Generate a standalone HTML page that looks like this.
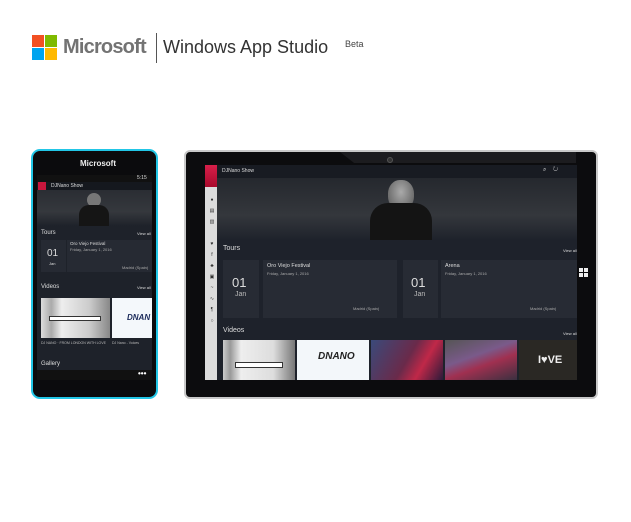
<!DOCTYPE html>
<html><head><meta charset="utf-8"><style>
*{margin:0;padding:0;box-sizing:border-box}
body{width:631px;height:522px;background:#fff;position:relative;overflow:hidden;font-family:"Liberation Sans",sans-serif}
.a{position:absolute}
.t{color:#ddd;white-space:nowrap}
</style></head><body>
<!-- logo -->
<div class="a" style="left:32px;top:35px;width:12px;height:12px;background:#f25022"></div>
<div class="a" style="left:45px;top:35px;width:12px;height:12px;background:#7fba00"></div>
<div class="a" style="left:32px;top:48px;width:12px;height:12px;background:#00a4ef"></div>
<div class="a" style="left:45px;top:48px;width:12px;height:12px;background:#ffb900"></div>
<div class="a" style="left:63px;top:36px;font-size:20px;font-weight:bold;color:#737373;letter-spacing:-0.8px;white-space:nowrap">Microsoft</div>
<div class="a" style="left:156px;top:33px;width:1px;height:30px;background:#555"></div>
<div class="a" style="left:163px;top:37px;font-size:18px;color:#333;white-space:nowrap">Windows App Studio</div>
<div class="a" style="left:345px;top:39px;font-size:9px;color:#444">Beta</div>

<!-- phone -->
<div class="a" style="left:31px;top:149px;width:127px;height:250px;border:2px solid #22c6e6;border-radius:9px;background:#0b0b0d"></div>
<div class="a t" style="left:80px;top:159px;font-size:8px;font-weight:bold;color:#eee">Microsoft</div>
<div class="a" style="left:37px;top:175px;width:115px;height:205px;background:#1e222a;overflow:hidden">
 <div class="a" style="left:0;top:0;width:115px;height:7px;background:#111"></div>
 <div class="a t" style="left:100px;top:0;font-size:5px">5:15</div>
 <div class="a" style="left:0;top:7px;width:115px;height:8px;background:#15181e"></div>
 <div class="a" style="left:1px;top:7px;width:8px;height:8px;background:#c8163c"></div>
 <div class="a t" style="left:14px;top:8px;font-size:5px">DJNano Show</div>
 <div class="a" style="left:0;top:15px;width:115px;height:36px;background:linear-gradient(#2a2d33,#35383d 60%,#1e222a)"></div>
 <div class="a" style="left:50px;top:18px;width:14px;height:14px;border-radius:50%;background:#777"></div>
 <div class="a" style="left:42px;top:30px;width:30px;height:21px;border-radius:10px 10px 0 0;background:#151515"></div>
 <div class="a t" style="left:4px;top:55px;font-size:6px">Tours</div>
 <div class="a t" style="left:100px;top:56px;font-size:4px">View all</div>
 <div class="a" style="left:4px;top:65px;width:25px;height:32px;background:#262a33"></div>
 <div class="a t" style="left:10px;top:73px;font-size:10px">01</div>
 <div class="a t" style="left:12px;top:86px;font-size:4px">Jan</div>
 <div class="a" style="left:30px;top:65px;width:85px;height:32px;background:#262a33"></div>
 <div class="a t" style="left:33px;top:66px;font-size:4.5px">Oro Viejo Festival</div>
 <div class="a t" style="left:33px;top:72px;font-size:4px;color:#aaa">Friday, January 1, 2016</div>
 <div class="a t" style="left:85px;top:90px;font-size:4px;color:#aaa">Madrid (Spain)</div>
 <div class="a t" style="left:4px;top:109px;font-size:6px">Videos</div>
 <div class="a t" style="left:100px;top:110px;font-size:4px">View all</div>
 <div class="a" style="left:4px;top:123px;width:69px;height:40px;background:linear-gradient(90deg,#ddd,#aaa 15%,#eee 30%,#ccc 70%,#888)"></div>
 <div class="a" style="left:12px;top:141px;width:52px;height:5px;background:#fff;border:1px solid #333"></div>
 <div class="a" style="left:75px;top:123px;width:40px;height:40px;background:#f4f8fb"></div>
 <div class="a" style="left:90px;top:138px;font-size:8px;font-style:italic;font-weight:bold;color:#1a2a5a">DNAN</div>
 <div class="a t" style="left:4px;top:166px;font-size:3.5px;color:#bbb">DJ NANO · FROM LONDON WITH LOVE</div>
 <div class="a t" style="left:75px;top:166px;font-size:3.5px;color:#bbb">DJ Nano - Voices</div>
 <div class="a t" style="left:4px;top:186px;font-size:6px">Gallery</div>
 <div class="a" style="left:0;top:195px;width:115px;height:10px;background:#111"></div>
 <div class="a t" style="left:101px;top:194px;font-size:8px;font-weight:bold;color:#fff">•••</div>
</div>

<!-- tablet -->
<div class="a" style="left:184px;top:150px;width:414px;height:249px;border:2px solid #c9c9c9;border-radius:6px;background:#0c0c0e"></div>
<div class="a" style="left:340px;top:152px;width:236px;height:11px;background:#1c1c1f;clip-path:polygon(0 0,100% 0,100% 100%,6% 100%)"></div>
<div class="a" style="left:387px;top:157px;width:6px;height:6px;border-radius:50%;background:#333;border:1px solid #555"></div>
<div class="a" style="left:579px;top:268px;width:4px;height:4px;background:#eee"></div>
<div class="a" style="left:584px;top:268px;width:4px;height:4px;background:#eee"></div>
<div class="a" style="left:579px;top:273px;width:4px;height:4px;background:#eee"></div>
<div class="a" style="left:584px;top:273px;width:4px;height:4px;background:#eee"></div>
<div class="a" style="left:205px;top:165px;width:372px;height:215px;background:#1e222b;overflow:hidden">
 <div class="a" style="left:0;top:0;width:372px;height:13px;background:#181b22"></div>
 <div class="a t" style="left:17px;top:3px;font-size:5px">DJNano Show</div>
 <div class="a t" style="left:338px;top:2px;font-size:6px">⌕&nbsp;&nbsp;&nbsp;&nbsp;↻</div>
 <div class="a" style="left:0;top:13px;width:372px;height:62px;background:linear-gradient(#25282e,#34373c 60%,#1e222b)"></div>
 <div class="a" style="left:183px;top:15px;width:26px;height:30px;border-radius:45%;background:radial-gradient(ellipse at 50% 40%,#aaa,#555)"></div>
 <div class="a" style="left:165px;top:38px;width:62px;height:37px;border-radius:18px 18px 0 0;background:#141414"></div>
 <div class="a" style="left:0;top:0;width:12px;height:215px;background:#dcdcdc"></div>
 <div class="a" style="left:0;top:0;width:12px;height:22px;background:linear-gradient(#d8204a,#a80a2c)"></div>
 <div class="a" style="left:3px;top:30px;font-size:5px;color:#333;line-height:11px;width:8px;text-align:center">●<br>▤<br>▥<br><br>♥<br>f<br>♣<br>▣<br>~<br>∿<br>¶<br>○</div>
 <div class="a t" style="left:18px;top:80px;font-size:7px">Tours</div>
 <div class="a t" style="left:358px;top:83px;font-size:4px">View all</div>
 <div class="a" style="left:18px;top:95px;width:36px;height:58px;background:#272b34"></div>
 <div class="a t" style="left:27px;top:110px;font-size:13px">01</div>
 <div class="a t" style="left:30px;top:126px;font-size:7px;color:#bbb">Jan</div>
 <div class="a" style="left:58px;top:95px;width:134px;height:58px;background:#272b34"></div>
 <div class="a t" style="left:62px;top:98px;font-size:5.5px">Oro Viejo Festival</div>
 <div class="a t" style="left:62px;top:106px;font-size:4px;color:#aaa">Friday, January 1, 2016</div>
 <div class="a t" style="left:148px;top:141px;font-size:4px;color:#aaa">Madrid (Spain)</div>
 <div class="a" style="left:198px;top:95px;width:35px;height:58px;background:#272b34"></div>
 <div class="a t" style="left:206px;top:110px;font-size:13px">01</div>
 <div class="a t" style="left:209px;top:126px;font-size:7px;color:#bbb">Jan</div>
 <div class="a" style="left:236px;top:95px;width:136px;height:58px;background:#272b34"></div>
 <div class="a t" style="left:240px;top:98px;font-size:5.5px">Arena</div>
 <div class="a t" style="left:240px;top:106px;font-size:4px;color:#aaa">Friday, January 1, 2016</div>
 <div class="a t" style="left:325px;top:141px;font-size:4px;color:#aaa">Madrid (Spain)</div>
 <div class="a t" style="left:18px;top:162px;font-size:7px">Videos</div>
 <div class="a t" style="left:358px;top:166px;font-size:4px">View all</div>
 <div class="a" style="left:18px;top:175px;width:72px;height:40px;background:linear-gradient(90deg,#ccc,#999 10%,#eee 25%,#ddd 70%,#777)"></div>
 <div class="a" style="left:30px;top:197px;width:48px;height:6px;background:#fff;border:1px solid #333"></div>
 <div class="a" style="left:92px;top:175px;width:72px;height:40px;background:#f3f7fa"></div>
 <div class="a" style="left:113px;top:186px;font-size:10px;font-style:italic;font-weight:bold;color:#222">DNANO</div>
 <div class="a" style="left:166px;top:175px;width:72px;height:40px;background:linear-gradient(120deg,#3a4a7a,#6a2a4a 50%,#c02848 70%,#2a1a3a)"></div>
 <div class="a" style="left:240px;top:175px;width:72px;height:40px;background:linear-gradient(160deg,#555,#7a5a8a 40%,#a03050 60%,#3a3040)"></div>
 <div class="a" style="left:314px;top:175px;width:58px;height:40px;background:#2a2824"></div>
 <div class="a t" style="left:333px;top:189px;font-size:11px;font-weight:bold;color:#eee">I♥VE</div>
</div>
</body></html>
